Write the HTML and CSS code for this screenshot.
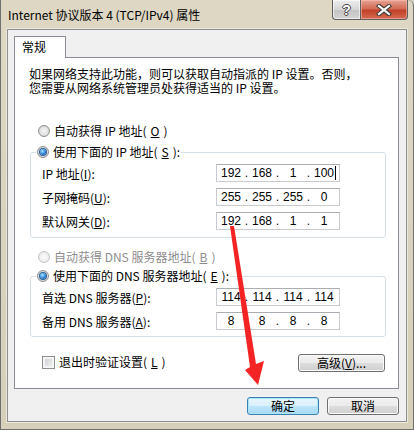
FILE: index.html
```html
<!DOCTYPE html>
<html lang="zh-CN">
<head>
    <meta charset="UTF-8">
    <title>Internet 协议版本 4 (TCP/IPv4) 属性</title>
    <link rel="stylesheet" href="styles.css">
</head>
<body>
    <div class="window">
        <div class="titlebar">
            <div class="title">Internet 协议版本 4 (TCP/IPv4) 属性</div>
            <div class="caption-btns">
                <div class="cap-btn help">?</div>
                <div class="cap-btn close">
                    <svg width="16" height="12" viewBox="0 0 16 12">
                        <path d="M3 2 L13 10 M13 2 L3 10" stroke="#3a3a3a" stroke-width="4.2" stroke-linecap="square"/>
                        <path d="M3 2 L13 10 M13 2 L3 10" stroke="#fff" stroke-width="2.2" stroke-linecap="square"/>
                    </svg>
                </div>
            </div>
        </div>
        <div class="client">
            <div class="tabs"><div class="tab">常规</div></div>
            <div class="page">
                <p class="intro">如果网络支持此功能，则可以获取自动指派的 IP 设置。否则，<br>您需要从网络系统管理员处获得适当的 IP 设置。</p>

                <label class="option first"><span class="radio"></span>自动获得 IP 地址(<u>O</u>)</label>
                <fieldset class="group ip-group">
                    <legend class="option"><span class="radio on"></span>使用下面的 IP 地址(<u>S</u>):</legend>
                    <div class="rows">
                        <div class="field">
                            <span class="label">IP 地址(<u>I</u>):</span>
                            <div class="ip"><span class="seg">192</span><span class="dot">.</span><span class="seg">168</span><span class="dot">.</span><span class="seg">1</span><span class="dot">.</span><span class="seg">100<i class="caret"></i></span></div>
                        </div>
                        <div class="field">
                            <span class="label">子网掩码(<u>U</u>):</span>
                            <div class="ip"><span class="seg">255</span><span class="dot">.</span><span class="seg">255</span><span class="dot">.</span><span class="seg">255</span><span class="dot">.</span><span class="seg">0</span></div>
                        </div>
                        <div class="field">
                            <span class="label">默认网关(<u>D</u>):</span>
                            <div class="ip"><span class="seg">192</span><span class="dot">.</span><span class="seg">168</span><span class="dot">.</span><span class="seg">1</span><span class="dot">.</span><span class="seg">1</span></div>
                        </div>
                    </div>
                </fieldset>

                <label class="option disabled"><span class="radio"></span>自动获得 DNS 服务器地址(<u>B</u>)</label>
                <fieldset class="group dns-group">
                    <legend class="option"><span class="radio on"></span>使用下面的 DNS 服务器地址(<u>E</u>):</legend>
                    <div class="rows">
                        <div class="field">
                            <span class="label">首选 DNS 服务器(<u>P</u>):</span>
                            <div class="ip"><span class="seg">114</span><span class="dot">.</span><span class="seg">114</span><span class="dot">.</span><span class="seg">114</span><span class="dot">.</span><span class="seg">114</span></div>
                        </div>
                        <div class="field">
                            <span class="label">备用 DNS 服务器(<u>A</u>):</span>
                            <div class="ip"><span class="seg">8</span><span class="dot">.</span><span class="seg">8</span><span class="dot">.</span><span class="seg">8</span><span class="dot">.</span><span class="seg">8</span></div>
                        </div>
                    </div>
                </fieldset>

                <div class="page-foot">
                    <label class="option check-opt"><span class="check"></span>退出时验证设置(<u>L</u>)</label>
                    <button class="btn adv">高级(<u>V</u>)...</button>
                </div>
            </div>
            <div class="actions">
                <button class="btn default">确定</button>
                <button class="btn">取消</button>
            </div>
        </div>
    </div>
    <svg class="arrow" width="414" height="430" viewBox="0 0 414 430">
        <polygon points="230,226 234,226 256,364 264,361 258,385 245,370 250,367" fill="#f42424"/>
    </svg>
</body>
</html>
```

FILE: styles.css
```css
* { box-sizing: border-box; }
body { margin: 0; position: relative; width: 414px; height: 430px; overflow: hidden; font-family: "Noto Sans CJK SC", sans-serif; font-size: 12px; color: #000; background: #d9d2bd; }
u { text-decoration: underline; }

.window { width: 414px; height: 430px; display: flex; flex-direction: column; background: linear-gradient(#ddd7c4, #d6cfb9); border: 1px solid #6f6f6f; border-top: none; border-top-right-radius: 6px; }
.titlebar { height: 29px; display: flex; justify-content: space-between; flex: none; }
.title { padding: 8px 0 0 7px; line-height: 14px; font-size: 12px; }
.caption-btns { display: flex; margin-right: 5px; height: 20px; }
.cap-btn { height: 20px; border: 1px solid #5f5f5f; border-top: none; display: flex; align-items: center; justify-content: center; }
.help { width: 28px; border-right: none; border-bottom-left-radius: 4px; background: linear-gradient(#eeeeee, #d6d6d6 50%, #c4c4c4 51%, #d2d2d2); color: #fff; font: bold 14px "Liberation Sans", sans-serif; text-shadow: 1px 0 #444, -1px 0 #444, 0 1px #444, 0 -1px #444; box-shadow: inset 0 0 0 1px rgba(255,255,255,0.6); }
.close { width: 48px; border-bottom-right-radius: 4px; background: linear-gradient(#e7a493, #d36b55 45%, #c2412a 55%, #d56a50); box-shadow: inset 0 0 0 1px rgba(255,200,190,0.5); }

.client { flex: 1; margin: 0 6px 7px 6px; border: 1px solid #8e8f90; background: #f0f0f0; padding: 6px 7px 0 6px; box-shadow: 0 0 0 1px #ebe7da; }
.tabs { display: flex; }
.tab { width: 52px; height: 22px; border: 1px solid #898c95; border-bottom: none; background: #fff; margin-bottom: -1px; position: relative; z-index: 1; padding-left: 7px; line-height: 20px; font-size: 12px; }
.page { height: 332px; border: 1px solid #898c95; background: #fff; padding-top: 9px; }

.intro { margin: 0 0 0 14px; line-height: 14px; }
.option { display: flex; align-items: center; gap: 4px; height: 14px; line-height: 14px; white-space: nowrap; }
.option.first { margin: 29px 0 0 23px; }
.option.disabled { margin: 12px 0 0 23px; color: #8d8d8d; }

.radio { width: 12px; height: 12px; flex: none; border-radius: 50%; border: 1px solid #8e8f8f; background: radial-gradient(circle at 50% 50%, #f6f6f6 0, #e2e2e2 55%, #c8c8c8 100%); display: flex; align-items: center; justify-content: center; }
.radio.on::after { content: ""; width: 6px; height: 6px; border-radius: 50%; background: radial-gradient(circle at 40% 35%, #a6e4ff 0, #2f86d8 55%, #0c3f80 100%); box-shadow: 0 0 0 1px #2a5f93; }
.disabled .radio { border-color: #c3c3c3; background: radial-gradient(circle, #fbfbfb 0, #efefef 60%, #e3e3e3 100%); }
.check { width: 13px; height: 13px; flex: none; border: 1px solid #8e8f8f; background: linear-gradient(135deg, #c9ccd1, #f5f5f5); box-shadow: inset 0 0 0 2px #f4f4f4; }

.group { margin: 7px 12px 0 15px; border: 1px solid #d5dfe5; border-radius: 3px; padding: 5px 44px 7px 11px; min-width: 0; }
.dns-group { margin-top: 5px; padding-bottom: 6px; }
.group legend { padding: 0 1px; margin-left: -6px; }
.rows { display: flex; flex-direction: column; gap: 6px; }
.field { display: flex; align-items: center; height: 18px; }
.label { width: 174px; flex: none; white-space: nowrap; }
.ip { width: 124px; height: 18px; display: flex; align-items: center; padding-left: 1px; border: 1px solid #c9cbd1; border-top-color: #abadb3; font: 12px "Liberation Sans", sans-serif; line-height: 16px; }
.seg { width: 26px; text-align: center; position: relative; }
.dot { width: 5px; text-align: center; }
.caret { position: absolute; right: 1px; top: 1px; width: 1px; height: 14px; background: #000; }

.page-foot { display: flex; justify-content: space-between; align-items: flex-start; margin: 17px 13px 0 27px; }
.check-opt { margin-top: 1px; }

.btn { height: 18px; padding: 0; border: 1px solid #707070; border-radius: 3px; background: linear-gradient(#f2f2f2 0%, #ebebeb 50%, #dddddd 51%, #cfcfcf 100%); box-shadow: inset 0 0 0 1px #fafafa; font-family: "Noto Sans CJK SC", sans-serif; font-size: 12px; line-height: 16px; color: #000; }
.btn u { text-decoration: underline; }
.adv { width: 87px; }
.actions { display: flex; justify-content: flex-end; gap: 8px; margin-top: 8px; }
.actions .btn { width: 72px; }
.btn.default { border-color: #3c7fb1; box-shadow: inset 0 0 0 1px #a9e4f8; background: linear-gradient(#eaf6fd 0%, #d9f0fc 50%, #bee6fd 51%, #a7d9f5 100%); }

.arrow { position: absolute; left: 0; top: 0; pointer-events: none; }
```
